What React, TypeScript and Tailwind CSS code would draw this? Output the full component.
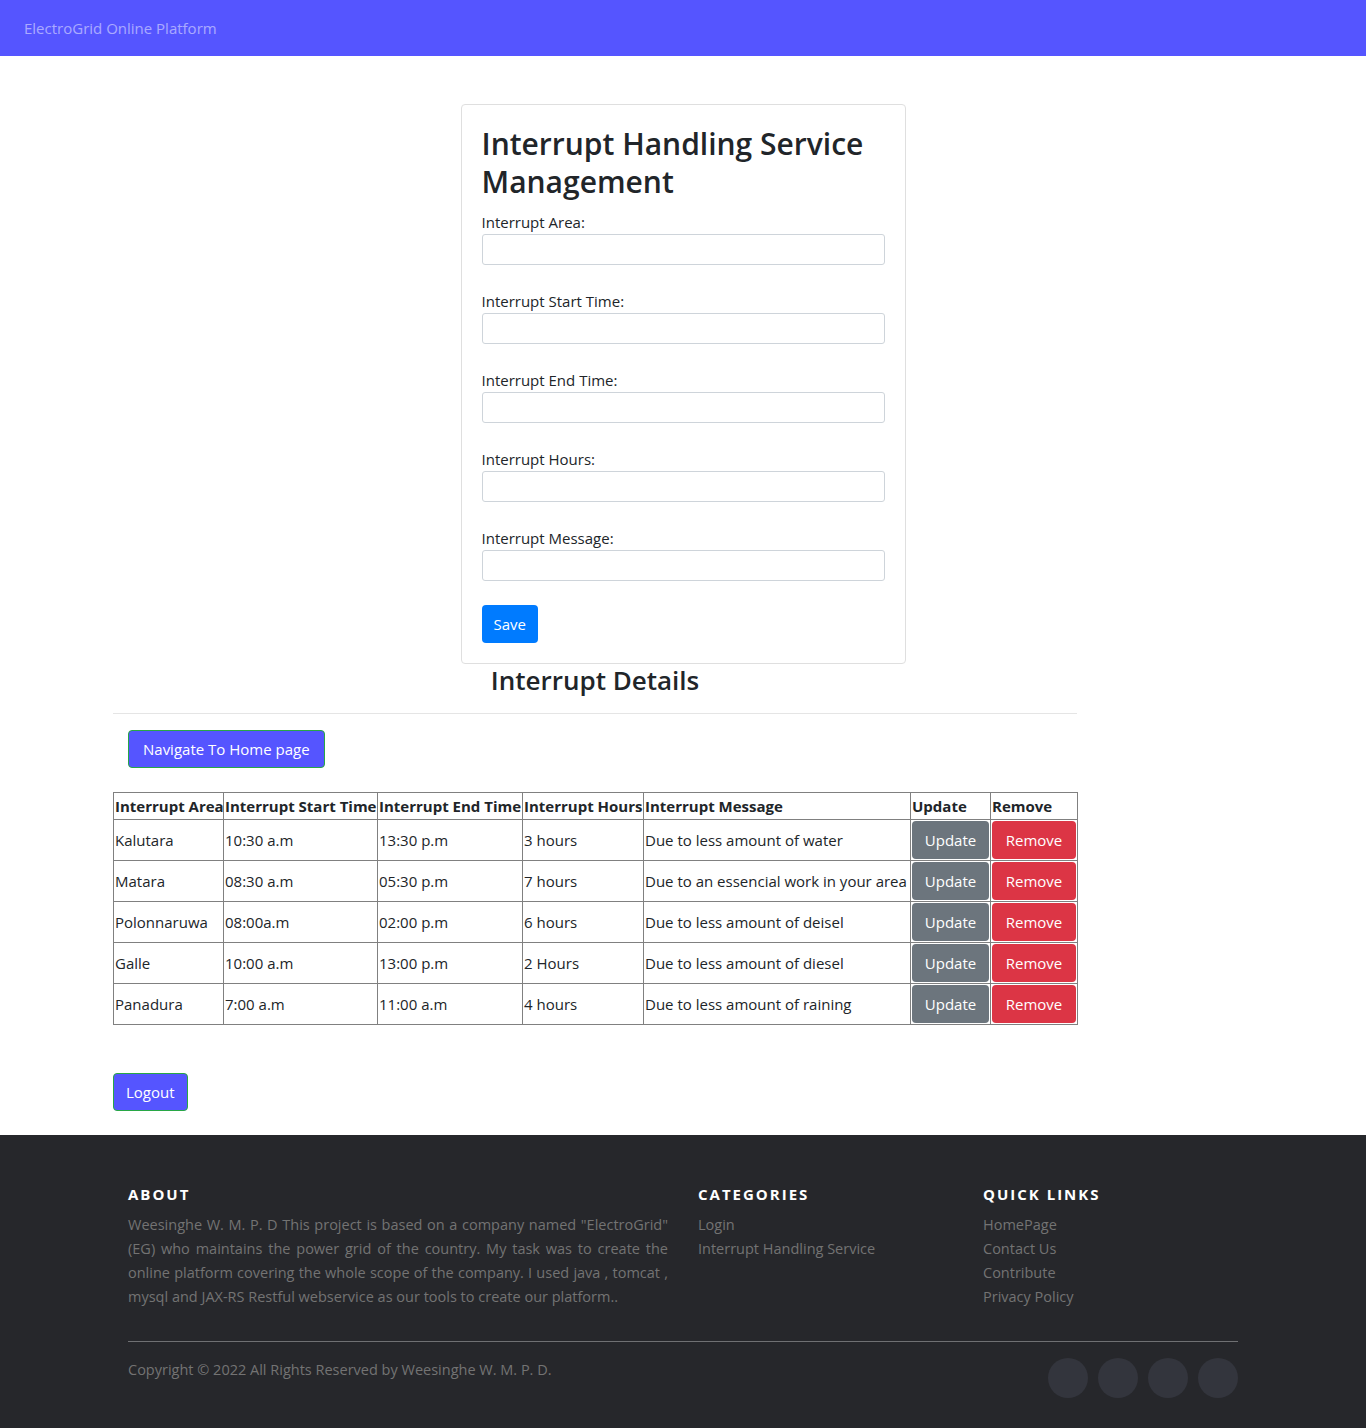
import React from 'react';

const rows = [
  { area: 'Kalutara', start: '10:30 a.m', end: '13:30 p.m', hours: '3 hours', msg: 'Due to less amount of water' },
  { area: 'Matara', start: '08:30 a.m', end: '05:30 p.m', hours: '7 hours', msg: 'Due to an essencial work in your area' },
  { area: 'Polonnaruwa', start: '08:00a.m', end: '02:00 p.m', hours: '6 hours', msg: 'Due to less amount of deisel' },
  { area: 'Galle', start: '10:00 a.m', end: '13:00 p.m', hours: '2 Hours', msg: 'Due to less amount of diesel' },
  { area: 'Panadura', start: '7:00 a.m', end: '11:00 a.m', hours: '4 hours', msg: 'Due to less amount of raining' },
];

const fields = ['Interrupt Area:', 'Interrupt Start Time:', 'Interrupt End Time:', 'Interrupt Hours:', 'Interrupt Message:'];

export default function App() {
  return (
    <div
      className="min-h-screen bg-white text-[#212529] text-[15px] leading-6"
      style={{ fontFamily: '"Open Sans", "Noto Sans", sans-serif' }}
    >
      {/* Navbar */}
      <nav className="h-14 bg-[#5555ff] flex items-center px-6">
        <span className="text-[15px] text-white/50">ElectroGrid Online Platform</span>
      </nav>

      <main className="w-[1140px] mx-auto pt-12">
        {/* Form card */}
        <div className="flex justify-center">
          <div className="w-[445px] border border-[#dfdfdf] rounded p-5">
            <h2 className="text-[30px] leading-[38.4px] font-semibold mb-2">Interrupt Handling Service Management</h2>
            {fields.map((f) => (
              <div key={f} className="mb-6">
                <label className="block">{f}</label>
                <input className="block w-full h-[31px] border border-[#ced4da] rounded-[3px] px-2 text-sm" />
              </div>
            ))}
            <button className="h-[38px] px-3 bg-[#007bff] text-white rounded">Save</button>
          </div>
        </div>

        {/* Details */}
        <div className="w-[964px]">
          <h3 className="text-[26px] leading-[33.6px] font-semibold text-center mb-2">Interrupt Details</h3>
          <hr className="mt-[16px] border-0 border-t border-black/10" />

          <div className="pt-4 pl-[15px]">
            <button className="h-[38px] px-[14px] bg-[#5555ff] text-white rounded border border-[#28a745]">
              Navigate To Home page
            </button>
          </div>

          <table className="mt-6 w-[964px] table-fixed border-collapse border border-[#808080]">
            <colgroup>
              <col className="w-[110px]" />
              <col className="w-[154px]" />
              <col className="w-[145px]" />
              <col className="w-[121px]" />
              <col className="w-[267px]" />
              <col className="w-[80px]" />
              <col className="w-[87px]" />
            </colgroup>
            <thead>
              <tr>
                {['Interrupt Area', 'Interrupt Start Time', 'Interrupt End Time', 'Interrupt Hours', 'Interrupt Message', 'Update', 'Remove'].map((h) => (
                  <th key={h} className="border border-[#808080] p-[1px] text-left font-bold whitespace-nowrap">
                    {h}
                  </th>
                ))}
              </tr>
            </thead>
            <tbody>
              {rows.map((r) => (
                <tr key={r.area}>
                  <td className="border border-[#808080] p-[1px] whitespace-nowrap">{r.area}</td>
                  <td className="border border-[#808080] p-[1px] whitespace-nowrap">{r.start}</td>
                  <td className="border border-[#808080] p-[1px] whitespace-nowrap">{r.end}</td>
                  <td className="border border-[#808080] p-[1px] whitespace-nowrap">{r.hours}</td>
                  <td className="border border-[#808080] p-[1px] whitespace-nowrap">{r.msg}</td>
                  <td className="border border-[#808080] p-[1px]">
                    <button className="w-full h-[38px] bg-[#6c757d] text-white rounded">Update</button>
                  </td>
                  <td className="border border-[#808080] p-[1px]">
                    <button className="w-full h-[38px] bg-[#dc3545] text-white rounded">Remove</button>
                  </td>
                </tr>
              ))}
            </tbody>
          </table>

          <div className="pt-12 pb-6">
            <button className="h-[38px] px-3 bg-[#5555ff] text-white rounded border border-[#28a745]">Logout</button>
          </div>
        </div>
      </main>

      {/* Footer */}
      <footer className="bg-[#26272b] text-[#737373] text-[14.5px] leading-6 pt-[45px] pb-[30px]">
        <div className="w-[1140px] mx-auto">
          <div className="flex">
            <div className="w-[570px] px-[15px]">
              <h6 className="text-white text-[15px] leading-[19px] font-bold uppercase tracking-[2px] mt-[5px] mb-[9px]">About</h6>
              <p className="text-justify">
                Weesinghe W. M. P. D This project is based on a company named "ElectroGrid" (EG) who maintains the power grid of the
                country. My task was to create the online platform covering the whole scope of the company. I used java , tomcat ,
                mysql and JAX-RS Restful webservice as our tools to create our platform..
              </p>
            </div>
            <div className="w-[285px] px-[15px]">
              <h6 className="text-white text-[15px] leading-[19px] font-bold uppercase tracking-[2px] mt-[5px] mb-[9px]">Categories</h6>
              <ul>
                <li>Login</li>
                <li>Interrupt Handling Service</li>
              </ul>
            </div>
            <div className="w-[285px] px-[15px]">
              <h6 className="text-white text-[15px] leading-[19px] font-bold uppercase tracking-[2px] mt-[5px] mb-[9px]">Quick Links</h6>
              <ul>
                <li>HomePage</li>
                <li>Contact Us</li>
                <li>Contribute</li>
                <li>Privacy Policy</li>
              </ul>
            </div>
          </div>
          <div className="px-[15px]">
            <hr className="mt-8 border-0 border-t border-[#6f7073]" />
            <div className="flex justify-between items-start pt-4">
              <p>Copyright © 2022 All Rights Reserved by Weesinghe W. M. P. D.</p>
              <div className="flex gap-[10px]">
                <span className="w-10 h-10 rounded-full bg-[#33353d]" />
                <span className="w-10 h-10 rounded-full bg-[#33353d]" />
                <span className="w-10 h-10 rounded-full bg-[#33353d]" />
                <span className="w-10 h-10 rounded-full bg-[#33353d]" />
              </div>
            </div>
          </div>
        </div>
      </footer>
    </div>
  );
}
